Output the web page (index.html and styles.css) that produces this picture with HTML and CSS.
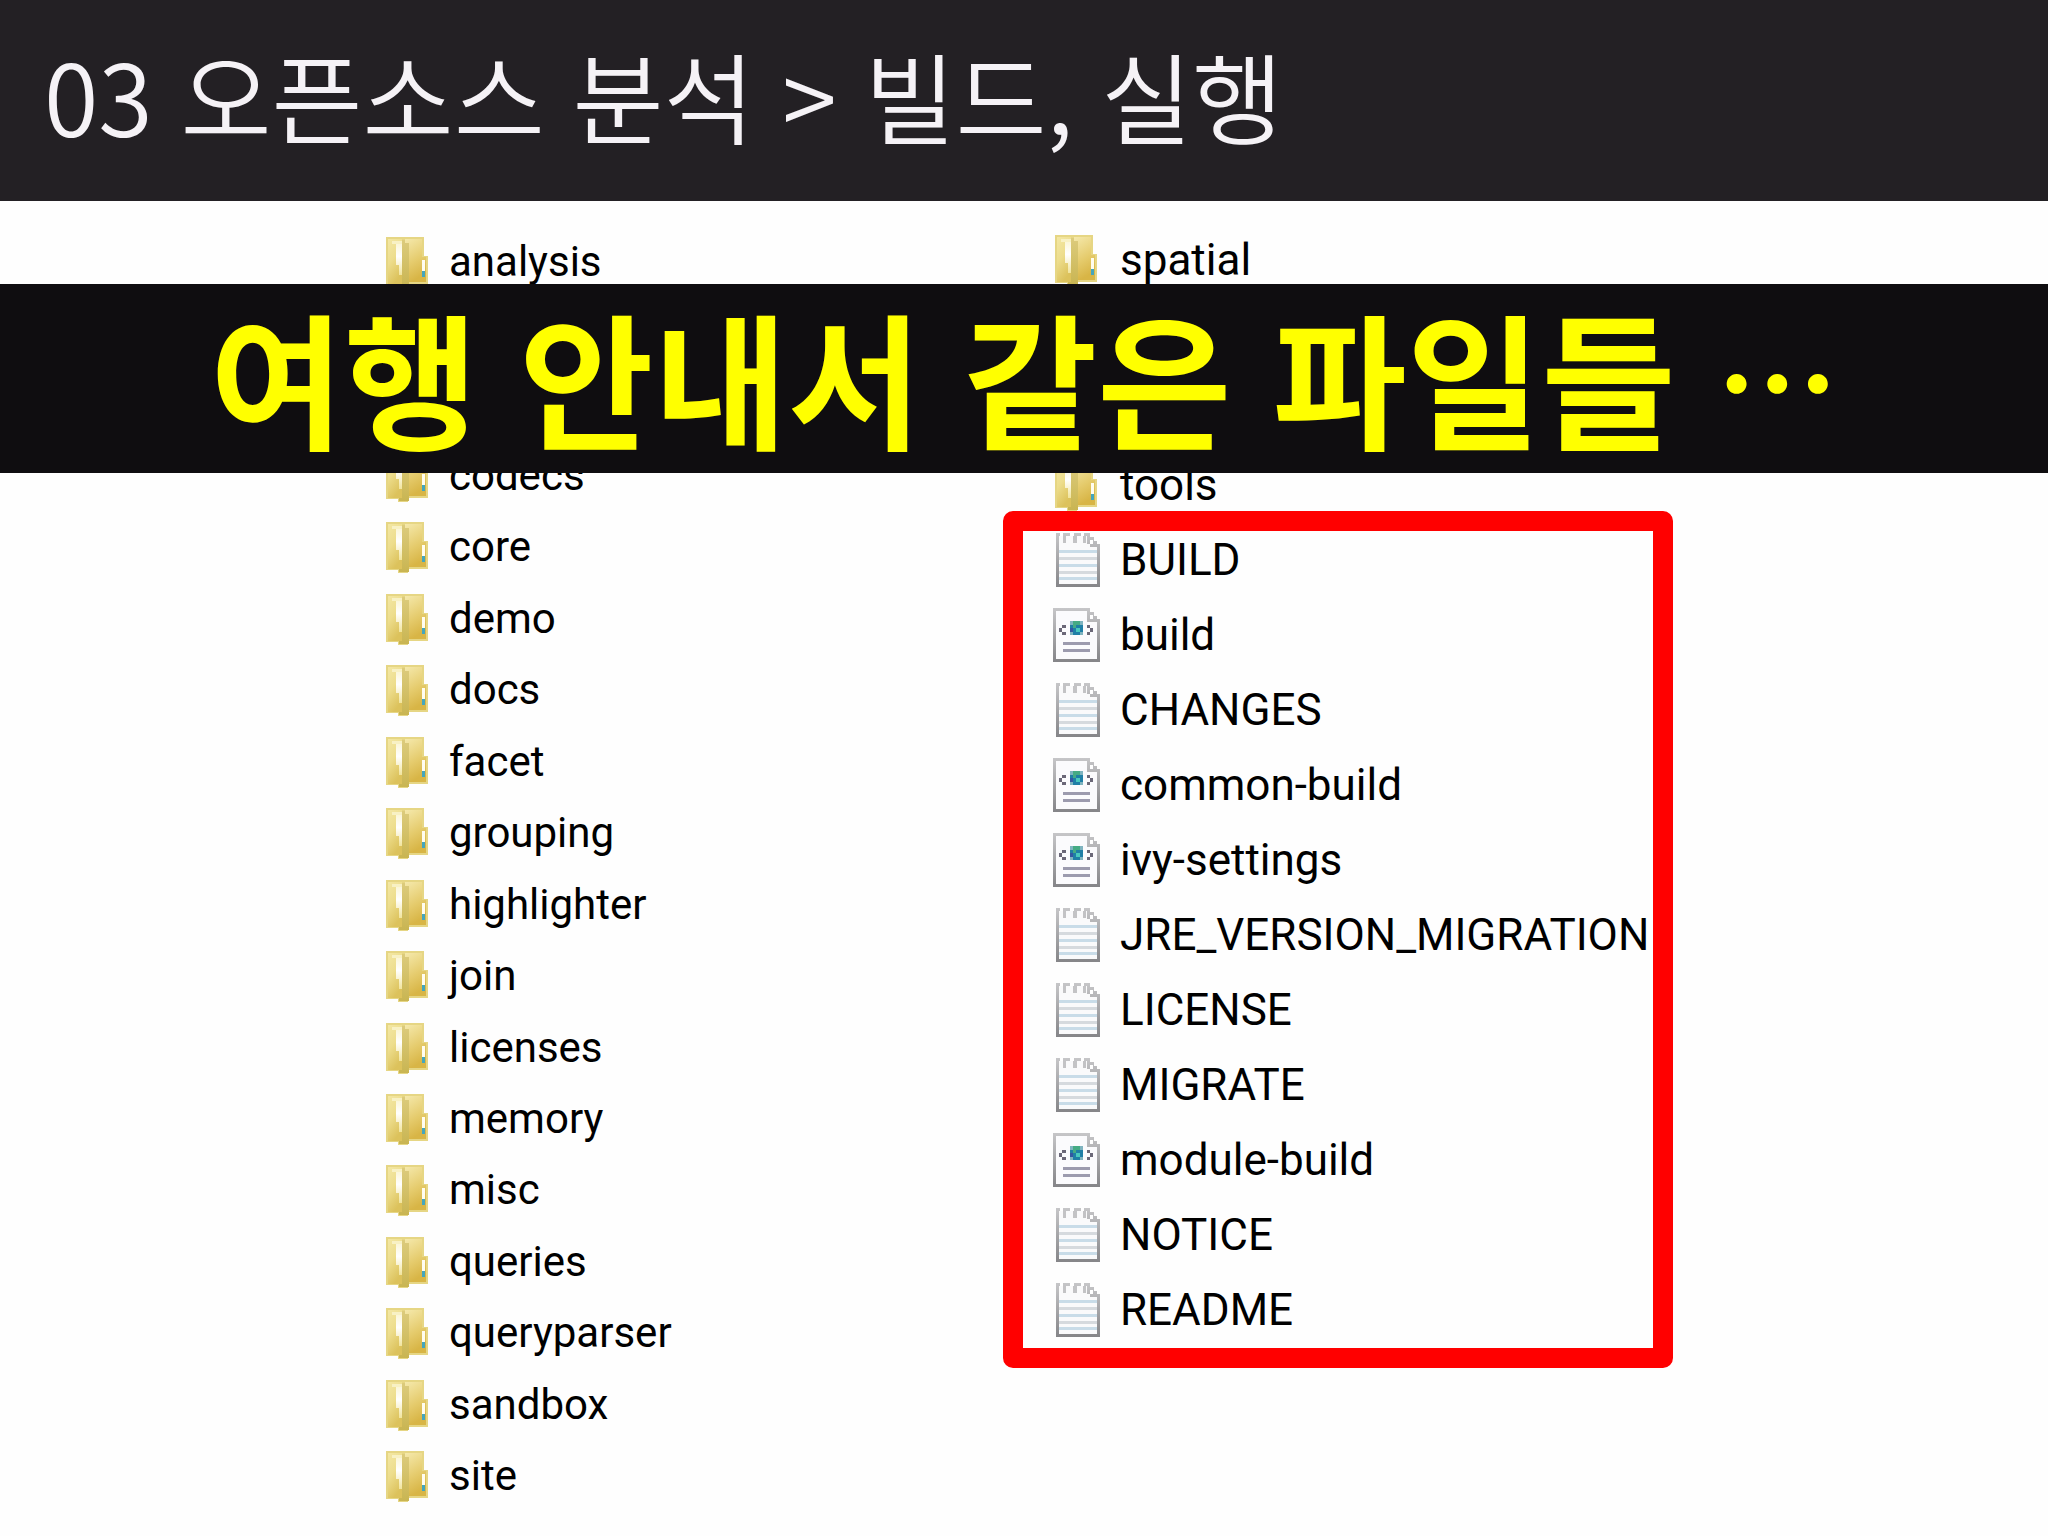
FILE: index.html
```html
<!DOCTYPE html>
<html lang="ko">
<head>
<meta charset="utf-8">
<meta name="viewport" content="width=device-width, initial-scale=1">
<title>03 오픈소스 분석 &gt; 빌드, 실행</title>
<link rel="stylesheet" href="styles.css">
</head>
<body>
<svg class="sprite" aria-hidden="true">
  <defs>
    <linearGradient id="cover" x1="0" y1="0" x2="0.4" y2="1">
      <stop offset="0" stop-color="#f3e7a4"/><stop offset="0.5" stop-color="#eddd8c"/><stop offset="1" stop-color="#dcc25c"/>
    </linearGradient>
    <linearGradient id="back" x1="0" y1="0" x2="0.3" y2="1">
      <stop offset="0" stop-color="#f5e9ac"/><stop offset="0.6" stop-color="#e5cb6c"/><stop offset="1" stop-color="#d8b546"/>
    </linearGradient>
    <linearGradient id="spine" x1="0" y1="0" x2="0" y2="1">
      <stop offset="0" stop-color="#dccb7c"/><stop offset="1" stop-color="#c9b552"/>
    </linearGradient>
    <linearGradient id="shine" x1="0" y1="0" x2="0" y2="1">
      <stop offset="0" stop-color="#fbf6d8"/><stop offset="0.4" stop-color="#ffffff"/><stop offset="1" stop-color="#f1e49c"/>
    </linearGradient>
    <linearGradient id="edge" x1="0" y1="0" x2="0" y2="1">
      <stop offset="0" stop-color="#c6c6c8"/><stop offset="1" stop-color="#858588"/>
    </linearGradient>
    <symbol id="folder" viewBox="0 0 44 54">
      <path d="M1 2H39V21H43V49H23V53H13V50H1Z" fill="#e6d684"/>
      <path d="M20 4H37V22H41V47H20Z" fill="url(#back)"/>
      <path d="M3 4H17V49H3Z" fill="url(#cover)"/>
      <path d="M17 5H20V8H24V52H14V49H17Z" fill="url(#spine)"/>
      <path d="M7 6H17V9H7Z" fill="#f8f1c4"/>
      <path d="M11 9H17V40H14V30H11Z" fill="url(#shine)"/>
      <path d="M37 25H40V36H37Z" fill="#fffdf0"/>
      <path d="M37 36H40V42H37Z" fill="#45a6bd"/>
    </symbol>
    <symbol id="text-file" viewBox="0 0 48 54">
      <path d="M4 0H38V4H42V8H45V11H48V54H4Z" fill="url(#edge)"/>
      <path d="M7 3H35V11H38V14H45V51H7Z" fill="#fafafb"/>
      <path d="M8 0H11V3H8ZM18 0H22V3H18ZM29 0H32V3H29Z" fill="#fff"/>
      <path d="M11 3H14V10H11ZM21 3H25V10H21ZM31 3H34V10H31Z" fill="#c3c3c5"/>
      <path d="M38 7H41V11H38Z" fill="#fff"/>
      <path d="M7 17H45V20H7ZM7 31H45V34H7ZM7 44H45V47H7Z" fill="#c9dce8"/>
      <path d="M7 24H45V27H7ZM7 38H45V41H7Z" fill="#d6dade"/>
    </symbol>
    <symbol id="xml-file" viewBox="0 0 48 54">
      <path d="M1 0H38V4H42V8H45V11H48V54H1Z" fill="url(#edge)"/>
      <path d="M4 3H35V14H45V51H4Z" fill="#fbfbfd"/>
      <path d="M38 7H41V11H38Z" fill="#fff"/>
      <path d="M10 17H14V20H10V24H14V27H10V24H7V20H10ZM35 17H38V20H41V24H38V27H35V24H38V20H35Z" fill="#6b6878"/>
      <path d="M18 13H31V27H18Z" fill="#7fb4c0"/>
      <path d="M21 13H28V17H31V24H28V27H21V24H18V17H21Z" fill="#1f7fa6"/>
      <path d="M21 13H28V17H24V20H21Z" fill="#45ab84"/>
      <path d="M24 20H28V24H24Z" fill="#48c8bd"/>
      <path d="M18 20H21V24H18Z" fill="#3557a0"/>
      <path d="M11 34H38V37H11ZM11 41H38V44H11Z" fill="#9c9bae"/>
    </symbol>
  </defs>
</svg>

<header class="title-bar">
  <h1>03 오픈소스 분석 &gt; 빌드, 실행</h1>
</header>

<main class="slide">
  <ul class="files files-left">
    <li><svg class="icon"><use href="#folder"/></svg>analysis</li>
    <li></li>
    <li></li>
    <li><svg class="icon"><use href="#folder"/></svg>codecs</li>
    <li><svg class="icon"><use href="#folder"/></svg>core</li>
    <li><svg class="icon"><use href="#folder"/></svg>demo</li>
    <li><svg class="icon"><use href="#folder"/></svg>docs</li>
    <li><svg class="icon"><use href="#folder"/></svg>facet</li>
    <li><svg class="icon"><use href="#folder"/></svg>grouping</li>
    <li><svg class="icon"><use href="#folder"/></svg>highlighter</li>
    <li><svg class="icon"><use href="#folder"/></svg>join</li>
    <li><svg class="icon"><use href="#folder"/></svg>licenses</li>
    <li><svg class="icon"><use href="#folder"/></svg>memory</li>
    <li><svg class="icon"><use href="#folder"/></svg>misc</li>
    <li><svg class="icon"><use href="#folder"/></svg>queries</li>
    <li><svg class="icon"><use href="#folder"/></svg>queryparser</li>
    <li><svg class="icon"><use href="#folder"/></svg>sandbox</li>
    <li><svg class="icon"><use href="#folder"/></svg>site</li>
  </ul>

  <div class="files-right">
    <ul class="files">
      <li><svg class="icon"><use href="#folder"/></svg>spatial</li>
      <li></li>
      <li></li>
      <li><svg class="icon"><use href="#folder"/></svg>tools</li>
    </ul>
    <ul class="files framed">
      <li><svg class="icon"><use href="#text-file"/></svg>BUILD</li>
      <li><svg class="icon"><use href="#xml-file"/></svg>build</li>
      <li><svg class="icon"><use href="#text-file"/></svg>CHANGES</li>
      <li><svg class="icon"><use href="#xml-file"/></svg>common-build</li>
      <li><svg class="icon"><use href="#xml-file"/></svg>ivy-settings</li>
      <li><svg class="icon"><use href="#text-file"/></svg>JRE_VERSION_MIGRATION</li>
      <li><svg class="icon"><use href="#text-file"/></svg>LICENSE</li>
      <li><svg class="icon"><use href="#text-file"/></svg>MIGRATE</li>
      <li><svg class="icon"><use href="#xml-file"/></svg>module-build</li>
      <li><svg class="icon"><use href="#text-file"/></svg>NOTICE</li>
      <li><svg class="icon"><use href="#text-file"/></svg>README</li>
    </ul>
  </div>

  <p class="banner">여행 안내서 같은 파일들 <span class="dots">⋯</span></p>
</main>
</body>
</html>
```
FILE: styles.css
```css
* {
  box-sizing: border-box;
}

body {
  display: flex;
  flex-direction: column;
  min-height: 100vh;
  margin: 0;
  background: #fefefe;
  color: #000;
  font-family: Roboto, "Noto Sans CJK KR", sans-serif;
}

.sprite {
  position: absolute;
  width: 0;
  height: 0;
}

.title-bar {
  padding: 22px 44px 35px;
  background: #232024;
  color: #f5f2f6;
}

.title-bar h1 {
  margin: 0;
  font: 350 99px/144px "Noto Sans CJK KR", sans-serif;
}

.slide {
  position: relative;
  flex: 1;
  display: grid;
  grid-template-columns: minmax(0, 667px) 1fr;
  padding: 21px 0 24px 385px;
}

.files {
  margin: 0;
  padding: 0;
  list-style: none;
}

.files li {
  display: flex;
  align-items: center;
  gap: 20px;
}

.icon {
  flex: none;
  width: 48px;
  height: 54px;
  shape-rendering: crispEdges;
}

.files-left {
  display: grid;
  grid-auto-rows: 1fr;
  padding-top: 4px;
  font-size: 42px;
  line-height: 50px;
}

.files-left .icon {
  width: 44px;
}

.files-right {
  font-size: 44px;
  line-height: 50px;
}

.files-right li {
  height: 75px;
}

.framed {
  position: relative;
  width: max-content;
}

/* highlight frame drawn over the group of files */
.framed::after {
  content: "";
  position: absolute;
  inset: -11px -24px -21px -49px;
  border: 20px solid #f00;
  border-radius: 10px;
}

.banner {
  position: absolute;
  top: 83px;
  left: 0;
  right: 0;
  height: 189px;
  margin: 0;
  background: #0f0d10;
  color: #ff0;
  font: 700 146px/182px "Noto Sans CJK KR", sans-serif;
  text-align: center;
}

.dots {
  font-size: 122px;
  line-height: 1;
  vertical-align: 8px;
}
```
